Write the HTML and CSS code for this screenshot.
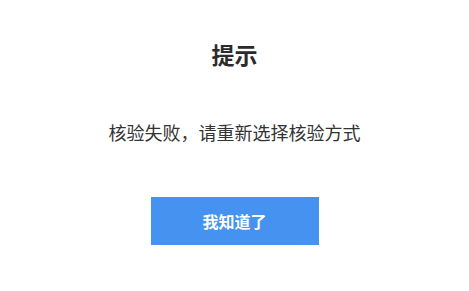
FILE: index.html
```html
<!DOCTYPE html>
<html lang="zh-CN">
<head>
<meta charset="utf-8">
<link rel="stylesheet" href="styles.css">
</head>
<body>
<div class="dialog">
  <h1 class="title">提示</h1>
  <p class="message">核验失败，请重新选择核验方式</p>
  <button class="btn">我知道了</button>
</div>
</body>
</html>
```
FILE: styles.css
```css
html, body {
  margin: 0;
  padding: 0;
  background: #fff;
}
.dialog {
  width: 469px;
  height: 291px;
  display: flex;
  flex-direction: column;
  align-items: center;
  padding-top: 39px;
  box-sizing: border-box;
  font-family: "Noto Sans CJK SC", "Noto Sans", sans-serif;
  color: #333;
}
.title {
  margin: 0;
  font-size: 23px;
  line-height: 30px;
  font-weight: 700;
  color: #2b2b2b;
}
.message {
  margin: 51px 0 0;
  font-size: 18px;
  line-height: 24px;
  color: #333;
}
.btn {
  margin-top: 53px;
  width: 168px;
  height: 48px;
  border: 0;
  background: #4592f0;
  color: #fff;
  font-family: "Noto Sans CJK SC", "Noto Sans", sans-serif;
  font-size: 16px;
  font-weight: 700;
  padding: 0;
}
```
